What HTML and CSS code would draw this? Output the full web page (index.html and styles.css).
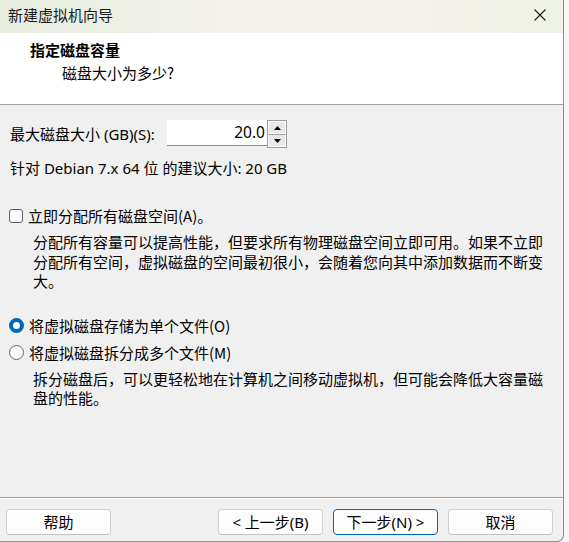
FILE: index.html
```html
<!DOCTYPE html>
<html lang="zh-CN">
<head>
<meta charset="utf-8">
<title>新建虚拟机向导</title>
<link rel="stylesheet" href="styles.css">
</head>
<body>
<div class="window">
  <div class="titlebar">
    <span class="title">新建虚拟机向导</span>
    <svg class="close" width="12" height="12" viewBox="0 0 12 12"><path d="M0.5 0.5 L11.5 11.5 M11.5 0.5 L0.5 11.5" stroke="#1a1a1a" stroke-width="1.1" fill="none"/></svg>
  </div>
  <div class="header">
    <div class="h-title">指定磁盘容量</div>
    <div class="h-sub">磁盘大小为多少?</div>
  </div>
  <div class="content">
    <div class="size-row">
      <span class="size-label">最大磁盘大小 (GB)(S):</span>
      <div class="spin">
        <div class="spin-input">20.0</div>
        <div class="spin-btns">
          <div class="spin-btn"><svg width="7" height="4" viewBox="0 0 7 4"><path d="M0 4 L3.5 0 L7 4Z" fill="#000"/></svg></div>
          <div class="spin-btn"><svg width="7" height="4" viewBox="0 0 7 4"><path d="M0 0 L7 0 L3.5 4Z" fill="#000"/></svg></div>
        </div>
      </div>
    </div>
    <div class="recommend">针对 Debian 7.x 64 位 的建议大小: 20 GB</div>

    <div class="option check-row">
      <span class="checkbox"></span>
      <span class="opt-label">立即分配所有磁盘空间(A)。</span>
    </div>
    <div class="desc">分配所有容量可以提高性能，但要求所有物理磁盘空间立即可用。如果不立即<br>分配所有空间，虚拟磁盘的空间最初很小，会随着您向其中添加数据而不断变<br>大。</div>

    <div class="option radio-row1">
      <span class="radio checked"></span>
      <span class="opt-label">将虚拟磁盘存储为单个文件(O)</span>
    </div>
    <div class="option radio-row2">
      <span class="radio"></span>
      <span class="opt-label">将虚拟磁盘拆分成多个文件(M)</span>
    </div>
    <div class="desc">拆分磁盘后，可以更轻松地在计算机之间移动虚拟机，但可能会降低大容量磁<br>盘的性能。</div>
  </div>
  <div class="footer">
    <button class="btn">帮助</button>
    <div class="btn-group">
      <button class="btn">&lt; 上一步(B)</button>
      <button class="btn default">下一步(N) &gt;</button>
      <button class="btn">取消</button>
    </div>
  </div>
</div>
</body>
</html>
```
FILE: styles.css
```css
html, body {
  margin: 0;
  padding: 0;
}
body {
  background: #f6f6f6;
  font-family: "Segoe UI", "Noto Sans", "Noto Sans CJK SC", sans-serif;
  font-size: 15px;
  color: #000;
  width: 569px;
  height: 542px;
  overflow: hidden;
}
.window {
  width: 564px;
  height: 542px;
  box-sizing: border-box;
  border-right: 1px solid #8e8e8e;
  border-bottom: 1px solid #8e8e8e;
  border-bottom-right-radius: 7px;
  background: #f0f0f0;
  display: flex;
  flex-direction: column;
  overflow: hidden;
}
.titlebar {
  height: 33px;
  flex: none;
  display: flex;
  align-items: center;
  justify-content: space-between;
  padding: 0 17px 4px 8px;
  box-sizing: border-box;
  background: linear-gradient(90deg, #e8eee0 0%, #f2f1ea 40%, #f3f1ea 75%, #eef2e6 100%);
}
.title {
  font-family: "Noto Sans CJK SC", sans-serif;
  font-size: 15px;
  line-height: 20px;
  color: #1a1a1a;
}
.header {
  height: 72px;
  flex: none;
  box-sizing: border-box;
  background: #fff;
  border-bottom: 1px solid #a0a0a0;
  padding-top: 7px;
}
.h-title {
  padding-left: 30px;
  font-family: "Noto Sans CJK SC", sans-serif;
  font-weight: bold;
  font-size: 15px;
  line-height: 20px;
}
.h-sub {
  padding-left: 62px;
  margin-top: 3px;
  font-family: "Noto Sans CJK SC", sans-serif;
  font-size: 15px;
  line-height: 20px;
}
.content {
  height: 392px;
  flex: none;
  box-sizing: border-box;
  padding: 15px 10px 0 10px;
  display: flex;
  flex-direction: column;
  align-items: flex-start;
  line-height: 20px;
}
.size-row {
  display: flex;
  align-items: center;
  height: 28px;
}
.size-label {
  width: 157px;
}
.spin {
  display: flex;
  height: 28px;
}
.spin-input {
  width: 100px;
  height: 26px;
  box-sizing: border-box;
  background: #fff;
  border-bottom: 1px solid #8a8a8a;
  text-align: right;
  padding-right: 2px;
  line-height: 25px;
  font-size: 15.5px;
}
.spin-btns {
  width: 20px;
  height: 28px;
  box-sizing: border-box;
  border: 1px solid #a0a0a0;
  display: flex;
  flex-direction: column;
}
.spin-btn {
  flex: 1;
  display: flex;
  align-items: center;
  justify-content: center;
  background: #e8e8e8;
  border: 1px solid #fdfdfd;
}
.spin-btn + .spin-btn {
  border-top: 1px solid #a0a0a0;
}
.recommend {
  margin-top: 10px;
}
.option {
  display: flex;
  align-items: center;
  height: 20px;
}
.check-row {
  margin-top: 28px;
}
.radio-row1 {
  margin-top: 25px;
}
.radio-row2 {
  margin-top: 7px;
}
.opt-label {
  margin-left: 5px;
  font-family: "Noto Sans CJK SC", sans-serif;
}
.checkbox {
  width: 14px;
  height: 14px;
  box-sizing: border-box;
  border: 1px solid #5f5f5f;
  border-radius: 3px;
  background: #fbfbfb;
  margin-left: -1px;
}
.radio {
  width: 15px;
  height: 15px;
  box-sizing: border-box;
  border: 1px solid #6a6a6a;
  border-radius: 50%;
  background: #fbfbfb;
  margin-left: -1px;
}
.radio.checked {
  border: 4px solid #0067c0;
  background: #fff;
}
.desc {
  margin-top: 6px;
  padding-left: 23px;
  line-height: 19.5px;
  font-family: "Noto Sans CJK SC", sans-serif;
  white-space: nowrap;
}
.footer {
  flex: 1;
  border-top: 1px solid #a0a0a0;
  box-shadow: inset 0 1px 0 #ffffff;
  display: flex;
  justify-content: space-between;
  align-items: flex-start;
  padding: 11px 10px 0 6px;
}
.btn-group {
  display: flex;
  gap: 10px;
}
.btn {
  width: 105px;
  height: 26px;
  box-sizing: border-box;
  background: #fdfdfd;
  border: 1px solid #d0d0d0;
  border-bottom-color: #c2c2c2;
  border-radius: 4px;
  font-family: "Segoe UI", "Noto Sans", "Noto Sans CJK SC", sans-serif;
  font-size: 15px;
  line-height: 22px;
  color: #000;
  padding: 0;
}
.btn.default {
  border: 1px solid #0067c0;
}
```
